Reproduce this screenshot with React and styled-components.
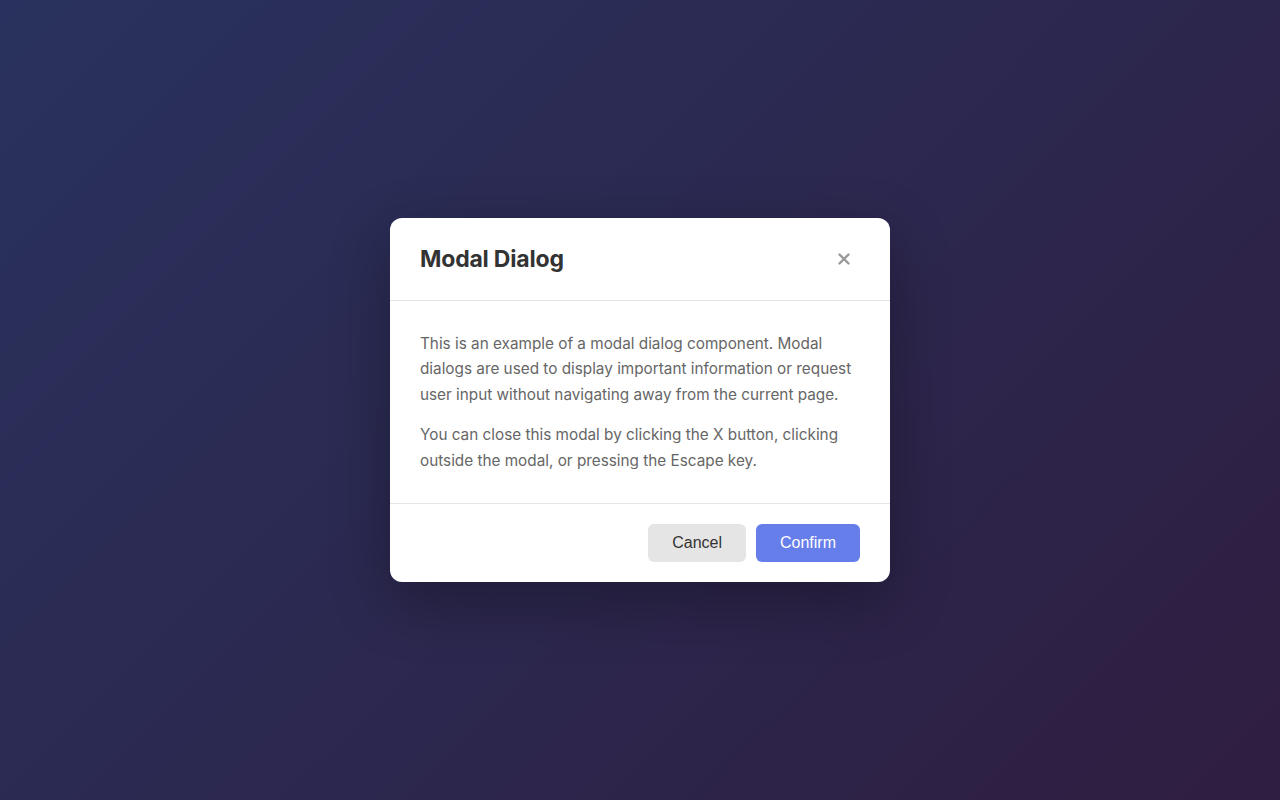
import React from 'react';
import styled, { createGlobalStyle } from 'styled-components';

const GlobalStyle = createGlobalStyle`
  * { box-sizing: border-box; }
  html, body {
    margin: 0;
    padding: 0;
    height: 100%;
  }
  body {
    font-family: 'Inter', 'Liberation Sans', sans-serif;
    background: linear-gradient(135deg, #667eea 0%, #764ba2 100%);
  }
  #root { height: 100%; }
`;

const Overlay = styled.div`
  width: 100vw;
  height: 100vh;
  background: rgba(0, 0, 0, 0.6);
  display: flex;
  align-items: center;
  justify-content: center;
`;

const Modal = styled.div`
  width: 500px;
  background: #fff;
  border-radius: 12px;
  box-shadow: 0 20px 60px rgba(0, 0, 0, 0.3);
  overflow: hidden;
`;

const Header = styled.div`
  display: flex;
  align-items: center;
  justify-content: space-between;
  padding: 24px 30px;
  border-bottom: 1px solid #e5e5e5;
`;

const Title = styled.h2`
  margin: 0;
  font-size: 23px;
  line-height: 34px;
  font-weight: 700;
  color: #333;
  letter-spacing: -0.2px;
`;

const CloseButton = styled.button`
  border: none;
  background: none;
  padding: 0;
  width: 32px;
  height: 32px;
  display: flex;
  align-items: center;
  justify-content: center;
  color: #999;
  cursor: pointer;
`;

const Body = styled.div`
  padding: 30px;
  border-bottom: 1px solid #e5e5e5;
`;

const Paragraph = styled.p`
  margin: 0 0 15px;
  font-size: 15.3px;
  line-height: 25.6px;
  color: #666;
  &:last-child { margin-bottom: 0; }
`;

const Footer = styled.div`
  display: flex;
  justify-content: flex-end;
  gap: 10px;
  padding: 20px 30px;
`;

const Button = styled.button`
  height: 38px;
  padding: 0 24px;
  border: none;
  border-radius: 6px;
  font-family: 'Liberation Sans', Arial, sans-serif;
  font-size: 16px;
  cursor: pointer;
  background: ${p => (p.$primary ? '#667eea' : '#e5e5e5')};
  color: ${p => (p.$primary ? '#fff' : '#333')};
`;

export default function App() {
  return (
    <>
      <GlobalStyle />
      <Overlay>
        <Modal>
          <Header>
            <Title>Modal Dialog</Title>
            <CloseButton aria-label="Close">
              <svg width="12" height="12" viewBox="0 0 12 12">
                <path d="M1.5 1.5 L10.5 10.5 M10.5 1.5 L1.5 10.5" stroke="currentColor" strokeWidth="2.4" strokeLinecap="round" />
              </svg>
            </CloseButton>
          </Header>
          <Body>
            <Paragraph>
              This is an example of a modal dialog component. Modal dialogs are used to display
              important information or request user input without navigating away from the current page.
            </Paragraph>
            <Paragraph>
              You can close this modal by clicking the X button, clicking outside the modal, or
              pressing the Escape key.
            </Paragraph>
          </Body>
          <Footer>
            <Button>Cancel</Button>
            <Button $primary>Confirm</Button>
          </Footer>
        </Modal>
      </Overlay>
    </>
  );
}
